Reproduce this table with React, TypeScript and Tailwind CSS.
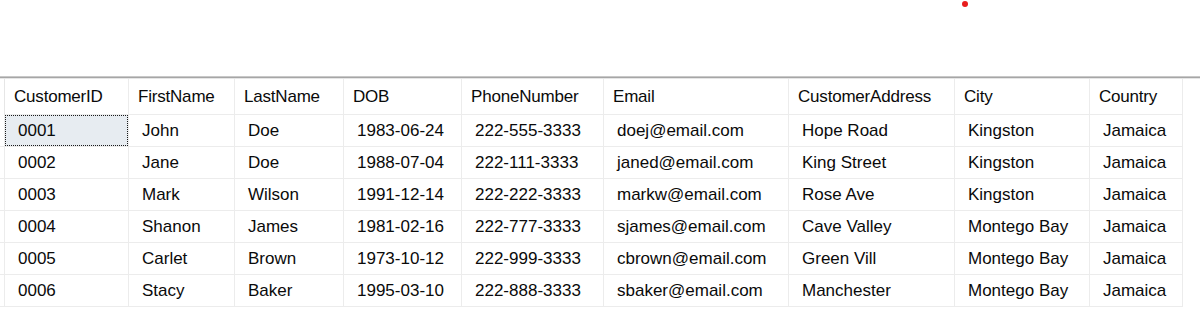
import React from 'react';

type Row = [string, string, string, string, string, string, string, string, string];

const columns: { label: string; width: string }[] = [
  { label: 'CustomerID', width: 'w-[124px]' },
  { label: 'FirstName', width: 'w-[106px]' },
  { label: 'LastName', width: 'w-[109px]' },
  { label: 'DOB', width: 'w-[118px]' },
  { label: 'PhoneNumber', width: 'w-[142px]' },
  { label: 'Email', width: 'w-[185px]' },
  { label: 'CustomerAddress', width: 'w-[166px]' },
  { label: 'City', width: 'w-[135px]' },
  { label: 'Country', width: 'w-[93px]' },
];

const rows: Row[] = [
  ['0001', 'John', 'Doe', '1983-06-24', '222-555-3333', 'doej@email.com', 'Hope Road', 'Kingston', 'Jamaica'],
  ['0002', 'Jane', 'Doe', '1988-07-04', '222-111-3333', 'janed@email.com', 'King Street', 'Kingston', 'Jamaica'],
  ['0003', 'Mark', 'Wilson', '1991-12-14', '222-222-3333', 'markw@email.com', 'Rose Ave', 'Kingston', 'Jamaica'],
  ['0004', 'Shanon', 'James', '1981-02-16', '222-777-3333', 'sjames@email.com', 'Cave Valley', 'Montego Bay', 'Jamaica'],
  ['0005', 'Carlet', 'Brown', '1973-10-12', '222-999-3333', 'cbrown@email.com', 'Green Vill', 'Montego Bay', 'Jamaica'],
  ['0006', 'Stacy', 'Baker', '1995-03-10', '222-888-3333', 'sbaker@email.com', 'Manchester', 'Montego Bay', 'Jamaica'],
];

export default function App() {
  return (
    <div
      className="relative w-[1200px] h-[320px] bg-white overflow-hidden text-[17px] text-[#0a0a0a]"
      style={{ fontFamily: '"Liberation Sans", Arial, sans-serif' }}
    >
      {/* stray red marker at the top */}
      <span className="absolute left-[962px] top-[1px] w-[6px] h-[6px] rounded-full bg-[#e81c1c]" />

      <div className="pt-[76px]">
        <div className="h-[1px] bg-[#c8c8c8]" />
        <div className="h-[1px] bg-[#a6a6a6]" />
        <div className="h-[1px] bg-[#e6e6e6]" />

        {/* header */}
        <div className="flex h-[36px]">
          <div className="w-[5px] border-r border-[#e6e6e6]" />
          {columns.map((c) => (
            <div
              key={c.label}
              className={`${c.width} shrink-0 flex items-center pl-[9px] border-r border-b border-[#ececec] leading-none tracking-[-0.2px]`}
            >
              {c.label}
            </div>
          ))}
        </div>

        {/* data rows */}
        {rows.map((r, ri) => (
          <div key={r[0]} className="flex h-[32px]">
            <div className="w-[5px] border-r border-b border-[#ececec]" />
            {r.map((v, ci) => {
              const selected = ri === 0 && ci === 0;
              return (
                <div
                  key={ci}
                  className={`${columns[ci].width} relative shrink-0 flex items-center pl-[13px] border-r border-b border-[#ececec] leading-none ${
                    selected ? 'bg-[#e7ecf1]' : ''
                  }`}
                >
                  {selected && (
                    <span className="absolute inset-0 border border-dotted border-[#1a1a1a]" />
                  )}
                  {v}
                </div>
              );
            })}
          </div>
        ))}
      </div>
    </div>
  );
}
